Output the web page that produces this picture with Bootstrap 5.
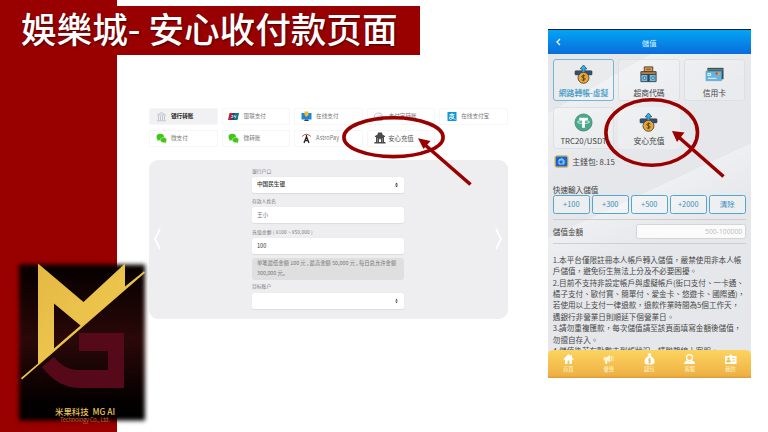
<!DOCTYPE html>
<html lang="zh-CN">
<head>
<meta charset="utf-8">
<meta name="viewport" content="width=device-width, initial-scale=1">
<title>安心收付款页面</title>
<link href="https://cdn.jsdelivr.net/npm/bootstrap@5.3.0/dist/css/bootstrap.min.css" rel="stylesheet">
<style>
body{margin:0;background:#fff;font-family:"Noto Sans CJK SC","Noto Sans",sans-serif;overflow:hidden}
.slide{width:768px;height:432px;display:grid;grid-template-columns:149px 359px 202px;grid-template-rows:55px 1fr;background:linear-gradient(90deg,#900 117px,#fff 117px)}
.band{grid-area:1/1/2/3;margin-top:6px;width:420px;height:49px;background:#900;color:#fff;font-size:35.6px;font-weight:500;line-height:44px;padding-left:21px;white-space:pre;text-shadow:1px 1px 2px rgba(40,0,0,.75)}
.logo-cell{grid-area:2/1;align-self:end;width:149px;height:177px}
.logo-cell svg{display:block}
.deposit{grid-area:2/2;padding-top:53px}
.methods{display:grid;grid-template-columns:repeat(5,68.8px);column-gap:3.75px;row-gap:5.5px}
.method{height:16.5px;border:1px solid #f6f6f6;border-radius:2px;font-size:5.6px;color:#777;padding:1.6px 0 0 5.5px;line-height:1;white-space:nowrap}
.method svg{width:11px;height:11px;margin:-1.8px 4.5px 0 0;flex:none}
.method.on{background:#f1f1f3;color:#222;font-weight:700}
.method.safe{font-size:6.4px;color:#555;padding-left:6px}
.method.safe svg{width:12px;height:12px;margin-right:2.5px}
.panel{margin-top:13.5px;height:158.5px;background:#eeeef0;border-radius:9px;padding:0 5px 0 4px}
.fields{width:152px;padding-top:6.7px}
.lab{font-size:4.8px;line-height:7px;color:#777;height:10.5px;white-space:pre}
.lab-amount{margin-bottom:.6px;padding-top:.4px;letter-spacing:.1px}
.inp{height:16px;background:#fff;border-radius:2.5px;box-shadow:0 .5px 1px rgba(0,0,0,.08);font-size:5.6px;line-height:1;color:#333;padding:0 5px;margin-bottom:3.8px}
.inp-amount{margin-bottom:3.4px}
.note{height:22px;background:#dfdfdf;border-radius:3px;font-size:5.35px;line-height:9.3px;color:#777;padding:1.6px 5px;white-space:nowrap;margin-bottom:2.4px}
.phone{grid-area:1/3/3/4;margin:29px 0 0 40px;width:202.5px;height:349px;overflow:hidden;font-family:"Noto Sans CJK TC","Noto Sans",sans-serif;color:#444;
background:linear-gradient(150deg,transparent 18%,rgba(255,255,255,.35) 18.2%,transparent 35%),linear-gradient(155deg,transparent 47%,rgba(255,255,255,.35) 47.2%,transparent 60%),#e5e7ea}
.phead{height:24.5px;border-top:1.5px solid #152030;background:linear-gradient(#02a5f4,#0a6cdc);color:#d9f1ff;font-size:7.4px;padding-left:8px}
.phead span{flex:1;text-align:center;margin-right:13px;padding-top:1px}
.pbody{padding:5.5px 4.8px 0;height:296.5px;overflow:hidden}
.cards{display:grid;grid-template-columns:repeat(3,61.6px);column-gap:3.8px;row-gap:6.8px}
.pc{height:41.6px;border:1px solid #dcdfe3;border-radius:3px;background:rgba(255,255,255,.18);font-size:7.8px;line-height:11px;white-space:nowrap;padding-bottom:2px}
.pc.on{border-color:#76b4da;color:#3a98c6;font-weight:500}
.pc.plain{border-color:transparent;background:rgba(255,255,255,.25)}
.pc svg{width:19px;height:19px;margin-bottom:3px}
.wallet{height:14px;margin:5.5px 0 0 1px;font-size:7.8px}
.wallet svg{width:15px;height:13px;margin-right:3.5px}
.quick{font-size:7.6px;line-height:10px;margin-top:16.8px}
.quick-row{gap:2px}
.qb{height:18.5px;border:1px solid #55a5cf;border-radius:2.5px;color:#3b8fba;font-size:7.4px;line-height:16.5px;text-align:center;flex:1;background:rgba(255,255,255,.3)}
.amount{margin-top:5px;border-top:1px solid #ccced1;border-bottom:1px solid #ccced1;height:25px;font-size:7.6px}
.amount div{width:110px;height:15px;border:1px solid #d4d4d6;border-radius:2.5px;background:#fbfbfb;color:#bbb;font-family:"Open Sans","Noto Sans",sans-serif;font-size:6.8px;line-height:14px;text-align:right;padding-right:2.5px}
.rules{margin-top:10.2px;font-size:7.6px;line-height:11.38px;white-space:nowrap;color:#484848}
.tabs{height:28px;border-radius:5px 5px 0 0;background:linear-gradient(#fcd45f,#efb244 90%,#dc9a3b);color:#fff6d8;font-size:5.3px;line-height:7px}
.tabs div{flex:1;padding-top:3px}
.tabs svg{width:13px;height:12px;margin-bottom:1px}
.marks{position:absolute;left:0;top:0;pointer-events:none}
</style>
<script src="https://cdn.jsdelivr.net/npm/bootstrap@5.3.0/dist/js/bootstrap.bundle.min.js"></script>
</head>
<body>
<svg width="0" height="0" class="position-absolute">
<defs>
<symbol id="wechat" viewBox="0 0 22 22"><ellipse cx="8.5" cy="8" rx="7.5" ry="6.3" fill="#3fc514"/><path d="M3 12l0 4 4-2z" fill="#3fc514"/><ellipse cx="15" cy="14" rx="6.4" ry="5.3" fill="#3fc514" stroke="#fff" stroke-width=".8"/><path d="M17 18l3 3-.5-4z" fill="#3fc514"/></symbol>
<symbol id="coin" viewBox="0 0 40 40"><path d="M4 12h32q2 0 2 2v5q0 2-2 2H4q-2 0-2-2v-5q0-2 2-2z" fill="#35506c" stroke="#26364a"/><path d="M20 0l7 8h-4v8h-6V8h-4z" fill="#28b4e8" stroke="#24455c" stroke-width="1.5"/><circle cx="20" cy="27" r="11.500" fill="#e9a93a" stroke="#5b4a34" stroke-width="2"/><path d="M24 23q-4-3-7 0t3 4 3 4-7 0M20 20v14" stroke="#614515" stroke-width="2" fill="none"/></symbol>
</defs>
</svg>
<div class="slide">
  <header class="band">娛樂城- 安心收付款页面</header>
  <div class="logo-cell">
    <svg width="149" height="177" viewBox="0 255 149 177">
      <defs>
        <linearGradient id="dark" x1="0" y1="0" x2="0" y2="1"><stop offset="0" stop-color="#050000"/><stop offset=".25" stop-color="#180404"/><stop offset=".48" stop-color="#2b0808"/><stop offset=".68" stop-color="#180404"/><stop offset=".88" stop-color="#040000"/><stop offset="1" stop-color="#000"/></linearGradient>
        <linearGradient id="gold" x1="0" y1="0" x2="1" y2="1"><stop offset="0" stop-color="#e2b642"/><stop offset=".5" stop-color="#ecc44c"/><stop offset="1" stop-color="#d6a637"/></linearGradient>
        <filter id="soft" x="-10%" y="-10%" width="120%" height="120%" color-interpolation-filters="sRGB"><feGaussianBlur stdDeviation="2"/></filter>
      </defs>
      <rect x="19" y="264.500" width="126" height="156" fill="url(#dark)" filter="url(#soft)"/>
      <path d="M79 333h45v55H80Q58 388 42 367L54 357Q63 369 77 370H108V351H79z" fill="#560918"/>
      <path fill-rule="evenodd" fill="url(#gold)" d="M38 263.500L83.500 302L125 263.500V286.500L144 271.300L145 272.700L22 379.500L21 378L38 363.500zM54 303.500V348.500L80.500 325.500z"/>
      <text x="55" y="414.500" font-size="8.200" font-weight="500" fill="#eac558" textLength="60" lengthAdjust="spacingAndGlyphs" xml:space="preserve">米果科技  MG AI</text>
      <text x="60" y="422" font-size="5.600" fill="#c6662f" textLength="50">Technology Co., Ltd.</text>
    </svg>
  </div>

  <main class="deposit">
    <div class="methods">
      <div class="method on d-flex align-items-center"><svg viewBox="0 0 22 22"><path d="M3 8l8-5 8 5zM5 10v8M9 10v8M13 10v8M17 10v8M2 19.500h18" stroke="#b0b5c2" stroke-width="1.500" fill="none"/></svg>银行转账</div>
      <div class="method d-flex align-items-center"><svg viewBox="0 0 22 22"><path d="M3 4h8L8 18H0z" fill="#c41e3a"/><path d="M9 4h7l-3 14H6z" fill="#1d4f86"/><path d="M15 4h7l-3 14h-7z" fill="#14767f"/><path d="M7 9h3l-1 4H6M12 13l1-4 2 4 1-4" stroke="#fff" stroke-width="1.300" fill="none"/></svg>银联支付</div>
      <div class="method d-flex align-items-center"><svg viewBox="0 0 22 22"><path d="M1 4h20v13H1z" fill="#1c86d8"/><path d="M7 1h8v7l-4 4-4-4z" fill="#f4bb2c"/><path d="M8 17h6l2 3H6z" fill="#2f4053"/></svg>在线支付</div>
      <div class="method d-flex align-items-center"><svg viewBox="0 0 22 22"><path d="M3 13q-1-8 8-9 7 0 8 5M7 10h12v9H7" fill="none" stroke="#b9c4d0" stroke-width="2"/></svg>支付宝转账</div>
      <div class="method d-flex align-items-center"><svg viewBox="0 0 22 22"><rect x="3" y="2" width="18" height="18" rx="1" fill="#1697d4"/><path d="M7 7h10M12 4v6M7 10h9q-2 6-7 7-4-1-2-4 4-2 12 4" stroke="#fff" stroke-width="1.600" fill="none"/></svg>在线支付宝</div>
      <div class="method d-flex align-items-center"><svg><use href="#wechat"/></svg>微支付</div>
      <div class="method d-flex align-items-center"><svg><use href="#wechat"/></svg>微转账</div>
      <div class="method d-flex align-items-center"><svg viewBox="0 0 22 22"><path d="M2 7Q11-2 20 7" stroke="#cf4a4a" stroke-width="2" fill="none"/><path d="M6 20L11 7l5 13M8 15h6M11 4v8" stroke="#252525" stroke-width="2.600" fill="none"/></svg>AstroPay</div>
      <div class="method safe d-flex align-items-center"><svg viewBox="0 0 24 24"><path d="M2 8l5-3 1-4h8l1 4 5 3v2H2zM4 10h16v11H4zM1 20h22v3H1z" fill="#4b4b4b"/><path d="M7 12v8M17 12v8" stroke="#aaa" stroke-width="1.200"/><path d="M10 20v-5l2-2 2 2v5z" fill="#fff"/></svg>安心充值</div>
    </div>
    <section class="panel d-flex align-items-center justify-content-between">
      <svg width="9" height="22" viewBox="0 0 9 22"><path d="M7 1L2 11l5 10" fill="none" stroke="#fff" stroke-width="1.700"/></svg>
      <div class="fields align-self-start">
        <div class="lab">银行户口</div>
        <div class="inp d-flex align-items-center justify-content-between"><b class="fw-medium">中国民生银</b><svg width="5" height="6" viewBox="0 0 5 6"><path d="M1 2.500L2.500.800 4 2.500zM1 3.500h3L2.500 5.200z" fill="#333"/></svg></div>
        <div class="lab">存款人姓名</div>
        <div class="inp d-flex align-items-center text-secondary">王小</div>
        <div class="lab lab-amount">充值金额 ( ¥100 ~ ¥50,000 )</div>
        <div class="inp inp-amount d-flex align-items-center">100</div>
        <div class="note">单笔最低金额 100 元 , 最高金额 50,000 元 , 每日总允许金额<br>300,000 元。</div>
        <div class="lab">目标账户</div>
        <div class="inp d-flex align-items-center justify-content-end"><svg width="5" height="6" viewBox="0 0 5 6"><path d="M1.300 2.500L2.500.800 3.700 2.500zM1.300 3.500h2.400L2.500 5.200z" fill="#333"/></svg></div>
      </div>
      <svg width="9" height="22" viewBox="0 0 9 22"><path d="M2 1l5 10-5 10" fill="none" stroke="#fff" stroke-width="1.700"/></svg>
    </section>
  </main>

  <section class="phone d-flex flex-column" lang="zh-TW">
    <div class="phead d-flex align-items-center"><svg width="5" height="8" viewBox="0 0 5 8"><path d="M4 1L1 4l3 3" stroke="#fff" stroke-width="1.200" fill="none"/></svg><span>儲值</span></div>
    <div class="pbody">
      <div class="cards">
        <div class="pc on d-flex flex-column align-items-center justify-content-end"><svg><use href="#coin"/></svg>網路轉帳-虛擬</div>
        <div class="pc d-flex flex-column align-items-center justify-content-end"><svg viewBox="0 0 40 40"><path d="M11 4h18v10H11z" fill="#d99b4c" stroke="#54402c" stroke-width="2"/><path d="M15 9h10" stroke="#6e4d26" stroke-width="2"/><path d="M4 14h32v6H4z" fill="#b67d44" stroke="#3c3e48" stroke-width="2"/><path d="M4 20h32v15H4z" fill="#78b8da" stroke="#354452" stroke-width="2"/><path d="M20 20v15" stroke="#354452" stroke-width="5"/><path d="M9 25h5v5H9zM27 25h5v5h-5z" fill="#e5f5fc" stroke="#2e79a4" stroke-width="2"/></svg>超商代碼</div>
        <div class="pc d-flex flex-column align-items-center justify-content-end"><svg viewBox="0 0 40 40"><path d="M5 6h34v24H5z" fill="#394d55"/><path d="M5 10h34" stroke="#76929a" stroke-width="2"/><path d="M2 13h33v20H2z" fill="#64b6e0" stroke="#4791b8"/><path d="M6 18h6v4H6zM6 28h18" stroke="#f6f4df" stroke-width="2" fill="none"/><circle cx="28" cy="18" r="3" fill="#e7a33d"/><circle cx="24.500" cy="18" r="2.500" fill="#cf4b42"/></svg>信用卡</div>
        <div class="pc d-flex flex-column align-items-center justify-content-end"><svg viewBox="0 0 40 40"><circle cx="20" cy="20" r="18" fill="#4ba889" stroke="#397e69" stroke-width="1.500"/><path d="M11 10h18v5h-6v16h-6V15h-6z" fill="#fff"/><ellipse cx="20" cy="19" rx="13" ry="3" fill="none" stroke="#fff" stroke-width="1.500"/></svg>TRC20/USDT</div>
        <div class="pc plain d-flex flex-column align-items-center justify-content-end"><svg><use href="#coin"/></svg>安心充值</div>
      </div>
      <div class="wallet d-flex align-items-center"><svg viewBox="0 0 15 13"><rect x="1" y=".800" width="13" height="11.400" rx="2" fill="#1767d1" stroke="#e8bd59" stroke-width="1.300"/><path d="M5 5h5v4H5zM5 5l3-1.500L9 5M8 7h2" fill="none" stroke="#b9dcff" stroke-width=".900"/></svg>主錢包: 8.15</div>
      <div class="quick">快速輸入儲值</div>
      <div class="quick-row d-flex">
        <div class="qb">+100</div><div class="qb">+300</div><div class="qb">+500</div><div class="qb">+2000</div><div class="qb">清除</div>
      </div>
      <div class="amount d-flex align-items-center justify-content-between">儲值金額<div>500-100000</div></div>
      <div class="rules">1.本平台僅限註冊本人帳戶轉入儲值，嚴禁使用非本人帳<br>戶儲值，避免衍生無法上分及不必要困擾。<br>2.目前不支持非設定帳戶與虛擬帳戶(街口支付、一卡通、<br>橘子支付、歐付寶、簡單付、愛金卡、悠遊卡、國際通)，<br>若使用以上支付一律退款，退款作業時間為5個工作天，<br>遇銀行非營業日則順延下個營業日。<br>3.請勿重複匯款，每次儲值請至該頁面填寫金額後儲值，<br>勿擅自存入。<br>4.儲值後若有點數未到帳狀況，請聯繫線上客服。</div>
    </div>
    <nav class="tabs d-flex">
      <div class="d-flex flex-column align-items-center"><svg viewBox="0 0 26 24"><path d="M13 2L2 13h4v9h5v-7h4v7h5v-9h4L20 9V4h-3v2z" fill="#fff"/></svg>首頁</div>
      <div class="d-flex flex-column align-items-center"><svg viewBox="0 0 26 24"><path d="M4 9h5l7-4v13l-7-4H4zM6 15h4v6H7zM19 6v10M22 6v10" fill="#fff6d8" stroke="#fff6d8" stroke-width="1.300"/></svg>優惠</div>
      <div class="d-flex flex-column align-items-center"><svg viewBox="0 0 26 24"><path d="M9 1h8l-2 5q8 4 8 11 0 6-5 6H8q-5 0-5-6 0-7 8-11z" fill="#fff"/><path d="M16 12q-4-2-5 1t2 2 2 3-5 1M13 10v11" stroke="#e8b64e" stroke-width="1.600" fill="none"/></svg>錢包</div>
      <div class="d-flex flex-column align-items-center"><svg viewBox="0 0 26 24"><circle cx="13" cy="9" r="6" fill="none" stroke="#fff" stroke-width="2.500"/><path d="M2 22q1-7 7-7l4 3 4-3q6 0 7 7z" fill="#fff"/></svg>客服</div>
      <div class="d-flex flex-column align-items-center"><svg viewBox="0 0 26 24"><path d="M2 6h9V3h5v3h9v16H2z" fill="#fff"/><circle cx="9" cy="11" r="2.500" fill="#efbd4f"/><path d="M5 18q0-4 4-4t4 4zM16 11h6M16 16h6" fill="#efbd4f" stroke="#efbd4f" stroke-width="1.500"/></svg>我的</div>
    </nav>
  </section>
</div>
<svg class="marks" width="768" height="432" viewBox="0 0 768 432" fill="none" stroke="#900" stroke-width="3.600">
  <ellipse cx="393.500" cy="137.200" rx="49.600" ry="19.400"/>
  <path d="M470.500 184.500L424 144"/>
  <path d="M418 138.300L430.500 141L423.500 149z" fill="#900" stroke="none"/>
  <ellipse cx="651.700" cy="132.500" rx="45.800" ry="32.700"/>
  <path d="M723.500 176.500L678 136.500"/>
  <path d="M672 131L684.500 132.500L677 142z" fill="#900" stroke="none"/>
</svg>
</body>
</html>
